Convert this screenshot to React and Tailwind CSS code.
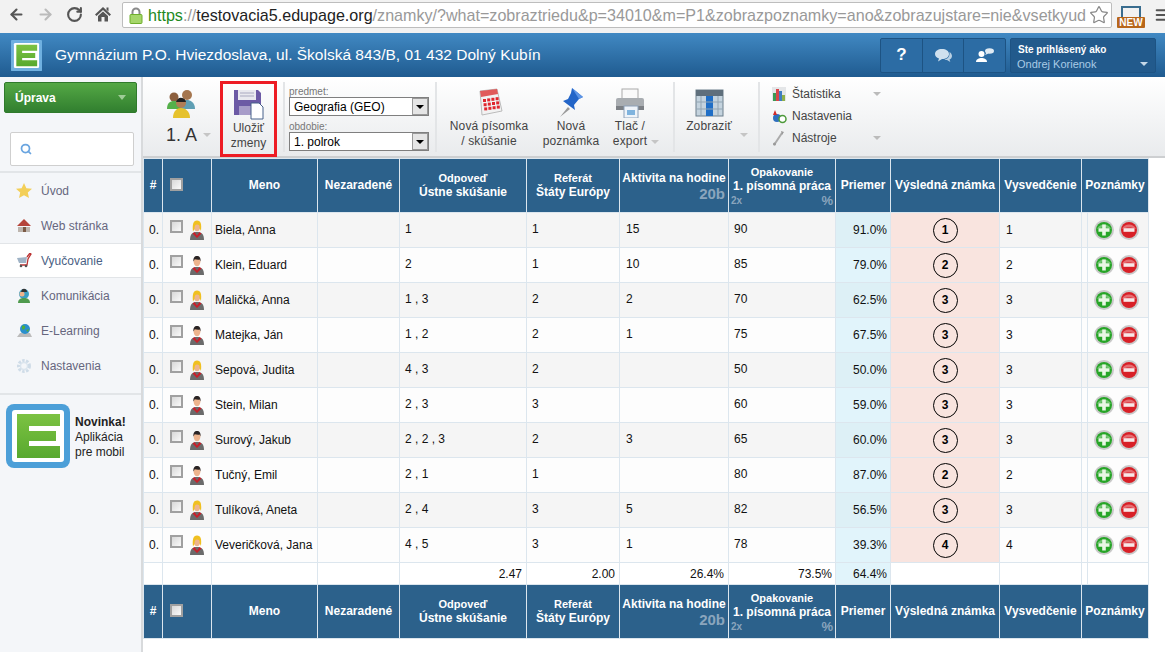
import React from "react";
import { ArrowLeft, ArrowRight, RotateCw, Star, Menu, Search } from "lucide-react";

const rows = [
  ["Biela, Anna", "f", "1", "1", "15", "90", "91.0%", "1", "1"],
  ["Klein, Eduard", "m", "2", "1", "10", "85", "79.0%", "2", "2"],
  ["Maličká, Anna", "f", "1 , 3", "2", "2", "70", "62.5%", "3", "3"],
  ["Matejka, Ján", "m", "1 , 2", "2", "1", "75", "67.5%", "3", "3"],
  ["Sepová, Judita", "f", "4 , 3", "2", "", "50", "50.0%", "3", "3"],
  ["Stein, Milan", "m", "2 , 3", "3", "", "60", "59.0%", "3", "3"],
  ["Surový, Jakub", "m", "2 , 2 , 3", "2", "3", "65", "60.0%", "3", "3"],
  ["Tučný, Emil", "m", "2 , 1", "1", "", "80", "87.0%", "2", "2"],
  ["Tulíková, Aneta", "f", "2 , 4", "3", "5", "82", "56.5%", "3", "3"],
  ["Veveričková, Jana", "f", "4 , 5", "3", "1", "78", "39.3%", "4", "4"],
];

const widths = [19, 49, 106, 82, 127, 93, 109, 107, 55, 109, 82, 6, 61];

function ELogo({ size = 64, radius = 9, border = "#4c9fd8" }) {
  return (
    <svg width={size} height={size} viewBox="0 0 64 64" className="shrink-0">
      <defs>
        <linearGradient id="eg" x1="0" y1="0" x2="0" y2="1">
          <stop offset="0" stopColor="#7cc242" />
          <stop offset="1" stopColor="#58a92f" />
        </linearGradient>
      </defs>
      <rect width="64" height="64" rx={radius} fill={border} />
      <rect x="6" y="6" width="52" height="52" rx="3" fill="#fff" />
      <path d="M11 10H54V22H23V27H50V37H23V42H54V54H11Z" fill="url(#eg)" />
    </svg>
  );
}

function Caret({ color = "#b5b5b5", w = 9 }) {
  return <span className="inline-block shrink-0" style={{ width: 0, height: 0, borderLeft: `${w / 2}px solid transparent`, borderRight: `${w / 2}px solid transparent`, borderTop: `${Math.round(w / 2)}px solid ${color}` }} />;
}

function Check() {
  return <span className="block w-[13px] h-[13px] border-2 border-[#a0a0a0] bg-gradient-to-br from-[#d8d8d8] to-[#fafafa]" />;
}

function Person({ f }) {
  return (
    <svg width="14" height="20" viewBox="0 0 14 20" className="block">
      <path d="M0 20C0 14 2.500 12 7 12S14 14 14 20Z" fill="#6b6b6b" />
      <path d="M4.500 12L7 15.500L9.500 12L11.500 13.500L7 18L2.500 13.500Z" fill="#c8202a" />
      <ellipse cx="7" cy="6.500" rx="3.400" ry="4.800" fill="#eeb48d" />
      {f ? (
        <path d="M3 11.500C2.300 5 3 0.500 7 0.500S11.700 4 11 11L9.500 8C10 5.500 9 4.500 7 4.500S4.500 6 4.500 9Z" fill="#f0c020" />
      ) : (
        <path d="M3.500 6.500C3 3 4.500 1 7 1S11 3 10.500 6.500L9.700 4.600C8 5 6 4.600 4.700 4.300Z" fill="#2a2424" />
      )}
    </svg>
  );
}

function Grade({ v }) {
  return <span className="mx-auto flex w-[25px] h-[25px] items-center justify-center rounded-full border border-black font-bold text-black">{v}</span>;
}

function RoundBtn({ plus }) {
  return (
    <svg width="20" height="20" viewBox="0 0 20 20" className="block">
      <circle cx="10" cy="10" r="10" fill="#c9c9c9" />
      <circle cx="10" cy="10" r="8" fill={plus ? "#27a527" : "#d81f26"} />
      <path d="M3 9C5 3 15 3 17 9C13 7 7 7 3 9Z" fill="#fff" opacity=".35" />
      {plus ? <path d="M8.200 4.500H11.800V8.200H15.500V11.800H11.800V15.500H8.200V11.800H4.500V8.200H8.200Z" fill="#e9f6e5" /> : <rect x="4.500" y="8.200" width="11" height="3.600" fill="#f8e8e8" />}
    </svg>
  );
}

function HeadRow() {
  const th = "border border-[#dce6ee] bg-[#2c618b] text-white font-bold text-center align-middle p-0 leading-[15px]";
  return (
    <tr className="h-[54px]">
      <th className={th}>#</th>
      <th className={th}><div className="pl-[7px] pb-[3px]"><Check /></div></th>
      <th className={th}>Meno</th>
      <th className={th}>Nezaradené</th>
      <th className={th}><div className="text-[11px] leading-[14px]">Odpoveď</div><div>Ústne skúšanie</div></th>
      <th className={th}><div className="text-[11px] leading-[14px]">Referát</div><div>Štáty Európy</div></th>
      <th className={th}>
        <div className="pt-[1px]">Aktivita na hodine</div>
        <div className="text-right text-[15px] leading-[16px] text-[#8aa5bd] pr-[3px]">20b</div>
      </th>
      <th className={th}>
        <div className="text-[11px] leading-[14px]">Opakovanie</div>
        <div>1. písomná práca</div>
        <div className="flex justify-between items-end px-[2px] text-[#8aa5bd] leading-[13px]"><span className="text-[10px]">2x</span><span className="text-[13px]">%</span></div>
      </th>
      <th className={th}>Priemer</th>
      <th className={th}>Výsledná známka</th>
      <th className={th}>Vysvedčenie</th>
      <th colSpan={2} className={th}>Poznámky</th>
    </tr>
  );
}

function Table() {
  const td = "border border-[#dce6ee] p-0 align-middle";
  return (
    <table className="table-fixed border-collapse w-[1005px] text-[12px] text-[#111]">
      <colgroup>{widths.map((w, i) => <col key={i} style={{ width: w }} />)}</colgroup>
      <thead><HeadRow /></thead>
      <tbody>
        {rows.map((r, i) => (
          <tr key={i} className={`h-[35px] ${i % 2 ? "bg-[#fdfdfd]" : "bg-[#f5f5f5]"}`}>
            <td className={`${td} pl-[5px]`}>0.</td>
            <td className={td}>
              <div className="flex items-start pl-[7px] gap-[7px] pb-[1px]"><Check /><Person f={r[1] === "f"} /></div>
            </td>
            <td className={`${td} pl-[3px] whitespace-nowrap`}>{r[0]}</td>
            <td className={td}></td>
            <td className={`${td} pl-[5px] pb-[2px] whitespace-pre`}>{r[2]}</td>
            <td className={`${td} pl-[5px] pb-[2px]`}>{r[3]}</td>
            <td className={`${td} pl-[6px] pb-[2px]`}>{r[4]}</td>
            <td className={`${td} pl-[5px] pb-[2px]`}>{r[5]}</td>
            <td className={`${td} text-right pr-[3px] ${i % 2 ? "bg-[#e1f4fb]" : "bg-[#ddf0f6]"}`}>{r[6]}</td>
            <td className={`${td} text-center bg-[#f9e4df]`}><Grade v={r[7]} /></td>
            <td className={`${td} pl-[6px]`}>{r[8]}</td>
            <td className={td}></td>
            <td className={td}><div className="flex justify-center gap-[5px] pr-[4px]"><RoundBtn plus /><RoundBtn /></div></td>
          </tr>
        ))}
        <tr className="h-[22px] bg-white">
          <td className={td}></td><td className={td}></td><td className={td}></td><td className={td}></td>
          <td className={`${td} text-right pr-[4px]`}>2.47</td>
          <td className={`${td} text-right pr-[4px]`}>2.00</td>
          <td className={`${td} text-right pr-[4px]`}>26.4%</td>
          <td className={`${td} text-right pr-[3px]`}>73.5%</td>
          <td className={`${td} text-right pr-[3px] bg-[#e1f4fb]`}>64.4%</td>
          <td className={td}></td><td className={td}></td><td className={td}></td><td className={td}></td>
        </tr>
        <HeadRow />
      </tbody>
    </table>
  );
}

function Chrome() {
  return (
    <div className="h-[33px] bg-[#f2f2f2] flex items-start">
      <div className="flex items-center w-[122px] h-[28px] pl-[8px] gap-[12px] text-[#555] shrink-0">
        <ArrowLeft size={17} strokeWidth={3} />
        <ArrowRight size={17} strokeWidth={3} className="text-[#bbb]" />
        <RotateCw size={17} strokeWidth={3} />
        <svg width="16" height="16" viewBox="0 0 16 16"><path d="M8 1L16 8.500L14.500 10L8 4L1.500 10L0 8.500ZM3 10L8 5.500L13 10V15.500H9.500V11H6.500V15.500H3ZM11.500 1.500H13.500V5.500L11.500 3.700Z" fill="#555" /></svg>
      </div>
      <div className="mt-[2px] w-[990px] h-[26px] shrink-0 bg-white border border-[#bdbdbd] rounded-[2px] flex items-center overflow-hidden">
        <svg width="14" height="17" viewBox="0 0 14 17" className="ml-[6px] mr-[5px] shrink-0"><path d="M3.500 8V5A3.500 3.500 0 0 1 10.500 5V8" fill="none" stroke="#8a8a8a" strokeWidth="2" /><rect x="1" y="7.500" width="12" height="9" rx="1" fill="#a5d66a" stroke="#6fae2c" /></svg>
        <span className="text-[16.100px] whitespace-nowrap text-[#999]"><span className="text-[#1e8a1e]">https</span>://<span className="text-[#222]">testovacia5.edupage.org</span>/znamky/?what=zobraztriedu&amp;p=34010&amp;m=P1&amp;zobrazpoznamky=ano&amp;zobrazujstare=nie&amp;vsetkyud</span>
        <Star size={20} strokeWidth={1.500} className="ml-auto mr-[2px] text-[#888] shrink-0" />
      </div>
      <div className="relative ml-[5px] w-[28px] h-[28px] shrink-0">
        <div className="mx-[4px] mt-[6px] h-[12px] border-2 border-[#3a6d8f] border-b-0" />
        <span className="absolute left-0 right-0 top-[17px] text-center bg-[#b8661a] text-white text-[10px] leading-[11px] font-bold rounded-[1px]">NEW</span>
      </div>
      <Menu size={16} strokeWidth={3} className="mt-[7px] ml-[9px] text-[#555] shrink-0" />
    </div>
  );
}

function Header() {
  return (
    <div className="h-[44px] bg-gradient-to-b from-[#4189c3] to-[#1f5b90] flex items-center text-white">
      <div className="ml-[11px] mr-[13px]"><ELogo size={31} radius={1} border="#6fb0e0" /></div>
      <span className="text-[15.500px]">Gymnázium P.O. Hviezdoslava, ul. Školská 843/B, 01 432 Dolný Kubín</span>
      <div className="ml-auto flex h-[35px] w-[126px] border border-[#1d5383] rounded-[2px] bg-[#2c6ca4]">
        <div className="flex-1 flex items-center justify-center font-bold text-[17px] border-r border-[#1d5383]">?</div>
        <div className="flex-1 flex items-center justify-center border-r border-[#1d5383]">
          <svg width="18" height="15" viewBox="0 0 18 15"><path d="M8 1C12 1 15 3 15 6S12 11 8 11L4 13.500L5 10.500C2.500 10 1 8 1 6C1 3 4 1 8 1Z" fill="#cfe0ee" /><path d="M15.500 4C17 5 18 6.500 18 8C18 9.500 17 11 15.500 11.500L16.300 14L13 12C11.500 12 10 11.600 9.500 11.500C13 11.500 16 9.500 15.500 4Z" fill="#b9d0e3" /></svg>
        </div>
        <div className="flex-1 flex items-center justify-center">
          <svg width="18" height="15" viewBox="0 0 18 15"><circle cx="5.500" cy="6" r="3" fill="#fff" /><path d="M0 14C0 11 3 10 5.500 10S11 11 11 14Z" fill="#fff" /><ellipse cx="13.500" cy="3" rx="4.500" ry="2.800" fill="#dfeaf3" /><path d="M10.500 4.500L9 7L12.500 5.500Z" fill="#dfeaf3" /></svg>
        </div>
      </div>
      <div className="ml-[4px] mr-[9px] w-[146px] h-[35px] bg-[#225a8c] rounded-[2px] border border-[#1d5383] pl-[6px] pr-[7px] pt-[4px]">
        <div className="text-[10px] leading-[14px] font-bold ml-px">Ste prihlásený ako</div>
        <div className="flex items-center justify-between text-[11px] leading-[14px] text-[#a9cbe6]"><span>Ondrej Korienok</span><Caret color="#c5d8e8" w={8} /></div>
      </div>
    </div>
  );
}

function Sidebar() {
  const items = [
    ["Úvod", <svg key="a" width="16" height="15" viewBox="0 0 16 15"><path d="M8 0L10.400 5.200L16 5.800L11.800 9.500L13 15L8 12.200L3 15L4.200 9.500L0 5.800L5.600 5.200Z" fill="#f3cf58" /></svg>],
    ["Web stránka", <svg key="b" width="16" height="15" viewBox="0 0 16 15"><rect x="2" y="9" width="12" height="5" fill="#bdb5ae" /><path d="M1 8L8 1L15 8Z" fill="#b5443a" /><rect x="7" y="9" width="3" height="5" fill="#7b5a45" /></svg>],
    ["Vyučovanie", <svg key="c" width="17" height="15" viewBox="0 0 17 15"><path d="M1 5L11 4L10 10L3 10Z" fill="#9fb3c6" /><path d="M11 4L14 0L15 1L12 6L11 12H4" stroke="#b33" strokeWidth="1.300" fill="none" /><circle cx="5" cy="13" r="1.300" fill="#555" /><circle cx="10" cy="13" r="1.300" fill="#555" /></svg>],
    ["Komunikácia", <svg key="d" width="16" height="16" viewBox="0 0 16 16"><circle cx="8" cy="6" r="5" fill="#3b9fc4" /><circle cx="6" cy="6" r="2.500" fill="#eeb48d" /><path d="M6 1.500A3 3 0 0 1 11 4H5Z" fill="#333" /><path d="M2 15C2 11 5 10 8 10S14 11 14 15Z" fill="#4f9b4f" /></svg>],
    ["E-Learning", <svg key="e" width="17" height="16" viewBox="0 0 17 16"><path d="M1 14L4 10H14L16 14Z" fill="#bbb" /><circle cx="9" cy="6" r="5" fill="#2a8fcc" /><path d="M6 3C8 2 10 3 9 5S6 7 6 5ZM10 7L13 6L12 9Z" fill="#4fae3c" /></svg>],
    ["Nastavenia", <svg key="f" width="16" height="16" viewBox="0 0 16 16"><circle cx="8" cy="8" r="5.500" fill="none" stroke="#cfdce8" strokeWidth="3" strokeDasharray="2.500 1.400" /><circle cx="8" cy="8" r="3.500" fill="none" stroke="#dbe5ee" strokeWidth="1.500" /></svg>],
  ];
  return (
    <aside className="w-[143px] shrink-0 bg-[#f4f6f9] border-r-2 border-[#d8dadc] h-[575px]">
      <div className="pl-[4px] pr-[4px] pt-[5px]">
        <div className="h-[31px] rounded-[2px] border border-[#2f7a2c] bg-gradient-to-b from-[#54a845] to-[#317f2f] flex items-center justify-between pl-[10px] pr-[10px] text-white font-bold text-[12px]">
          <span>Úprava</span><Caret color="#9fcc97" w={9} />
        </div>
      </div>
      <div className="mt-[19px] ml-[10px] mr-[7px] h-[34px] bg-white border border-[#cfcfcf] rounded-[2px] flex items-center pl-[9px]">
        <Search size={12} strokeWidth={3.500} className="text-[#6aa5e0]" />
      </div>
      <div className="mt-[5px] border-t-2 border-[#e2e5e8]" />
      <div className="text-[12px] text-[#66667e]">
        {items.map(([t, ic], i) => (
          <div key={t} className={`h-[35px] flex items-center ${i === 2 ? "bg-white border-y border-[#e2e5e8] text-[#4a5f84]" : ""}`}>
            <span className="w-[41px] pl-[16px] flex shrink-0">{ic}</span>
            <span>{t}</span>
          </div>
        ))}
      </div>
      <div className="mt-[10px] border-t-2 border-[#e2e5e8]" />
      <div className="flex items-center pl-[6px] pt-[9px] gap-[5px]">
        <ELogo size={64} radius={8} />
        <div className="text-[12px] leading-[15px] text-[#222] pt-[3px]"><b>Novinka!</b><br />Aplikácia<br />pre mobil</div>
      </div>
    </aside>
  );
}

function Sep() {
  return <div className="w-[2px] h-[70px] mt-[5px] bg-[#e3e5e7] shrink-0" />;
}

function TItem({ w, icon, l1, l2 }) {
  return (
    <div className={`flex flex-col items-center shrink-0 ${w}`}>
      <div className="h-[33px] mt-[9px] flex items-center justify-center">{icon}</div>
      <div className="text-[12px] leading-[15px] tracking-[0.15px] text-center text-[#444] whitespace-nowrap">{l1}<br />{l2}</div>
    </div>
  );
}

function Sel({ label, value, mt }) {
  return (
    <div className={mt}>
      <div className="text-[10px] leading-[11px] text-[#777]">{label}</div>
      <div className="h-[19px] w-[140px] bg-white border border-[#7f7f7f] flex items-center justify-between text-[12px] text-black pl-[4px]">
        <span>{value}</span>
        <span className="w-[16px] h-[17px] bg-[#e5e5e5] border border-[#999] flex items-center justify-center"><Caret color="#000" w={8} /></span>
      </div>
    </div>
  );
}

function ToolRow({ icon, label, caret }) {
  return (
    <div className="h-[22px] flex items-center text-[12px] text-[#444] w-[110px]">
      <span className="w-[20px] flex shrink-0">{icon}</span>
      <span>{label}</span>
      {caret && <span className="ml-auto mr-[1px] flex"><Caret color="#bbb" w={8} /></span>}
    </div>
  );
}

function Toolbar() {
  return (
    <div className="h-[81px] bg-gradient-to-b from-white to-[#e9ebed] border-b-2 border-[#cdcfd1] flex shrink-0">
      <div className="w-[77px] shrink-0 flex flex-col pl-[23px]">
        <svg width="32" height="32" viewBox="0 0 32 32" className="mt-[10px]">
          <circle cx="21" cy="8" r="5" fill="#a5764f" /><path d="M15 22C15 15 18 13 21 13S29 15 29 22Z" fill="#5f9fb4" />
          <circle cx="8" cy="10" r="4.500" fill="#8c5f3e" /><path d="M1 22C1 16 4 14 8 14S15 16 15 22Z" fill="#55b04a" />
          <circle cx="15" cy="16" r="5" fill="#b07d55" /><path d="M16 11A5 5 0 0 1 20 15L10 15A5 5 0 0 1 16 11Z" fill="#222" /><path d="M7 31C7 24 11 21 15 21S24 24 24 31Z" fill="#e6c22c" />
        </svg>
        <div className="flex items-center mt-[4px] gap-[6px] text-[18px] leading-[24px] text-[#333]">1. A <Caret color="#c5c5c5" w={8} /></div>
      </div>
      <div className="w-[57px] h-[76px] mt-[4px] shrink-0 border-[3px] border-[#ed1c24] flex flex-col items-center">
        <svg width="31" height="33" viewBox="0 0 31 33" className="mt-[3px]">
          <path d="M1 3H25L28 6V28H1Z" fill="#6c5aa5" /><rect x="5" y="3" width="18" height="10" fill="#e9e9ef" /><path d="M7 6H21M7 9H21" stroke="#a9a9c0" /><rect x="6" y="19" width="15" height="9" fill="#a79cc9" /><path d="M18 16H26L30 20V32H18Z" fill="#fff" stroke="#46608a" />
        </svg>
        <div className="text-[12px] leading-[15px] text-center text-[#444] mt-[1px]">Uložiť<br />zmeny</div>
      </div>
      <div className="ml-[6px]"><Sep /></div>
      <div className="ml-[4px] w-[146px] shrink-0 pt-[9px]">
        <Sel label="predmet:" value="Geografia (GEO)" />
        <Sel label="obdobie:" value="1. polrok" mt="mt-[5px]" />
      </div>
      <Sep />
      <TItem w="w-[98px] ml-[8px] pr-[10px]" l1="Nová písomka" l2="/ skúšanie" icon={
        <svg width="28" height="30" viewBox="0 0 28 30"><path d="M5 3L22 1L27 23L7 27Z" fill="#f2f2f2" stroke="#bbb" /><path d="M5 3L22 1L23 6L6 9Z" fill="#e05a5a" />{[0, 1, 2].map(r => [0, 1, 2, 3].map(c => <rect key={r + "" + c} x={8 + c * 4.200 + r * 0.600} y={11 + r * 4.200 - c * 0.600} width="3" height="3" fill="#e0262e" />))}</svg>} />
      <TItem w="w-[68px] -ml-[6px]" l1="Nová" l2="poznámka" icon={
        <svg width="26" height="32" viewBox="0 0 26 32"><path d="M2 30L10 20L12 22Z" fill="#999" /><path d="M14 1L25 10L21 12L16 18L17 23L5 14L10 12L13 6Z" fill="#2365c8" /><path d="M14 1L25 10L21 12Z" fill="#5d95e6" /></svg>} />
      <TItem w="w-[50px]" l1="Tlač /" l2="export" icon={
        <svg width="30" height="30" viewBox="0 0 30 30"><rect x="7" y="1" width="16" height="10" fill="#fafafa" stroke="#aaa" /><rect x="1" y="10" width="28" height="11" rx="2" fill="#a9adb1" /><rect x="1" y="18" width="28" height="4" fill="#7c8085" /><rect x="9" y="18" width="14" height="12" fill="#eef3f9" stroke="#8ca0b8" /><rect x="12" y="22" width="8" height="5" fill="#7fb3de" /></svg>} />
      <div className="pt-[54px] w-[22px] -ml-[4px] shrink-0"><Caret color="#c5c5c5" w={8} /></div>
      <Sep />
      <div className="w-[70px] ml-[6px] flex shrink-0">
        <TItem w="w-[56px]" l1="Zobraziť" icon={
          <svg width="29" height="28" viewBox="0 0 29 28"><rect x="1" y="1" width="27" height="26" fill="#c4d3de" stroke="#6d7f8c" /><rect x="1" y="1" width="27" height="6" fill="#5f6f7c" /><rect x="11" y="7" width="7" height="20" fill="#1f6ec6" /><path d="M1 13H28M1 20H28M6 7V27M23 7V27" stroke="#92a5b3" /></svg>} />
        <div className="pt-[47px] pl-[3px]"><Caret color="#c5c5c5" w={8} /></div>
      </div>
      <div className="ml-[7px]"><Sep /></div>
      <div className="ml-[12px] pt-[6px]">
        <ToolRow label="Štatistika" caret icon={<svg width="14" height="14" viewBox="0 0 14 14"><rect width="14" height="14" fill="#e4e6e8" /><rect x="1" y="6" width="3" height="8" fill="#3a9a54" /><rect x="4" y="2" width="3" height="12" fill="#d8464a" /><rect x="7" y="4" width="3" height="10" fill="#3f7dc1" /><rect x="10" y="8" width="3" height="6" fill="#8fb04a" /></svg>} />
        <ToolRow label="Nastavenia" icon={<svg width="15" height="15" viewBox="0 0 15 15"><circle cx="5" cy="9" r="4" fill="#2f6fbf" /><circle cx="10.500" cy="10" r="3.500" fill="#fff" stroke="#4d9a3a" strokeWidth="1.500" /><path d="M3 1L5 6H1Z" fill="#d32a2a" /></svg>} />
        <ToolRow label="Nástroje" caret icon={<svg width="14" height="16" viewBox="0 0 14 16"><path d="M2 15L10 3" stroke="#aaa" strokeWidth="2" /><circle cx="2.500" cy="14" r="1.500" fill="#999" /><path d="M9 1L12 2L10 5Z" fill="#999" /></svg>} />
      </div>
    </div>
  );
}

export default function App() {
  return (
    <div className="w-[1165px] h-[652px] overflow-hidden bg-white text-[12px]" style={{ fontFamily: '"Liberation Sans", Arial, sans-serif' }}>
      <Chrome />
      <Header />
      <div className="flex">
        <Sidebar />
        <main className="flex-1 min-w-0 flex flex-col">
          <Toolbar />
          <div><Table /></div>
        </main>
      </div>
    </div>
  );
}
